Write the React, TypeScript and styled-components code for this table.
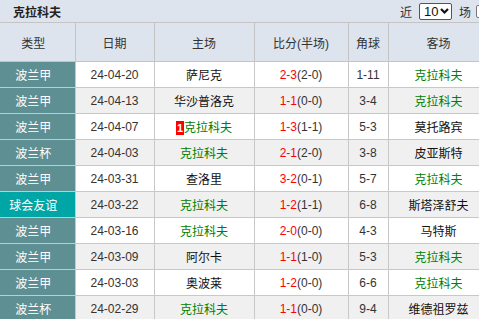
import React from "react";
import styled, { createGlobalStyle } from "styled-components";

const Global = createGlobalStyle`
  html, body { margin: 0; padding: 0; background: #fff; overflow: hidden; }
  body { font-family: "Liberation Sans", "Noto Sans CJK SC", sans-serif; font-size: 12px; color: #333; }
`;

const Page = styled.div`
  width: 489px;
`;

const TopBar = styled.div`
  height: 22px;
  background: #dde4ee;
  display: flex;
  align-items: center;
  padding-left: 13px;
`;

const Title = styled.div`
  font-weight: bold;
  font-size: 12px;
  color: #222;
  flex: 1;
`;

const Filter = styled.div`
  display: flex;
  align-items: center;
  flex-shrink: 0;
  font-size: 12px;
  color: #333;
`;

const FakeSelect = styled.div`
  box-sizing: border-box;
  flex-shrink: 0;
  width: 33px;
  height: 17px;
  border: 1px solid #555;
  border-radius: 2px;
  background: #fff;
  margin: 0 7px 0 7px;
  display: flex;
  align-items: center;
  justify-content: space-between;
  padding: 0 2px 0 4px;
  font-size: 13px;
  color: #111;
`;

const Check = styled.div`
  flex-shrink: 0;
  width: 11px;
  height: 11px;
  border: 1px solid #777;
  border-radius: 2px;
  background: #fff;
  margin-left: 5px;
`;

const Table = styled.table`
  border-collapse: collapse;
  table-layout: fixed;
  width: 489px;
`;

const HeadCell = styled.th`
  height: 38px;
  padding: 0;
  background: #dde4ee;
  border: 1px solid #c4c4c4;
  font-weight: normal;
  font-size: 12px;
  color: #333;
  text-align: center;
  &:first-child { border-left: none; padding-right: 8px; }
`;

const Row = styled.tr<{ $alt: boolean }>`
  background: ${(p) => (p.$alt ? "#f0f0f0" : "#fff")};
`;

const Cell = styled.td`
  height: 25px;
  padding: 0;
  border: 1px solid #c8c8c8;
  text-align: center;
  font-size: 12px;
  color: #333;
  white-space: nowrap;
`;

const TypeCell = styled.td<{ $friendly: boolean }>`
  height: 25px;
  padding: 0 8px 0 0;
  border: 1px solid #c8c8c8;
  border-left: none;
  text-align: center;
  font-size: 12px;
  color: #fff;
  background: ${(p) => (p.$friendly ? "#00a6a6" : "#5e8f92")};
`;

const Team = styled.span<{ $home: boolean }>`
  color: ${(p) => (p.$home ? "#008000" : "#111")};
`;

const Badge = styled.span`
  display: inline-block;
  background: #ff0000;
  color: #fff;
  font-weight: bold;
  font-size: 11px;
  line-height: 14px;
  padding: 0 1px;
`;

const Score = styled.span`
  color: #f00;
`;

const Half = styled.span`
  color: #333;
`;

type Match = {
  type: string;
  date: string;
  home: string;
  score: string;
  half: string;
  corner: string;
  away: string;
  badge?: string;
};

const TEAM = "克拉科夫";

const matches: Match[] = [
  { type: "波兰甲", date: "24-04-20", home: "萨尼克", score: "2-3", half: "(2-0)", corner: "1-11", away: TEAM },
  { type: "波兰甲", date: "24-04-13", home: "华沙普洛克", score: "1-1", half: "(0-0)", corner: "3-4", away: TEAM },
  { type: "波兰甲", date: "24-04-07", home: TEAM, score: "1-3", half: "(1-1)", corner: "5-3", away: "莫托路宾", badge: "1" },
  { type: "波兰杯", date: "24-04-03", home: TEAM, score: "2-1", half: "(2-0)", corner: "3-8", away: "皮亚斯特" },
  { type: "波兰甲", date: "24-03-31", home: "查洛里", score: "3-2", half: "(0-1)", corner: "5-7", away: TEAM },
  { type: "球会友谊", date: "24-03-22", home: TEAM, score: "1-2", half: "(1-1)", corner: "6-8", away: "斯塔泽舒夫" },
  { type: "波兰甲", date: "24-03-16", home: TEAM, score: "2-0", half: "(0-0)", corner: "4-3", away: "马特斯" },
  { type: "波兰甲", date: "24-03-09", home: "阿尔卡", score: "1-1", half: "(1-0)", corner: "5-3", away: TEAM },
  { type: "波兰甲", date: "24-03-03", home: "奥波莱", score: "1-2", half: "(0-0)", corner: "6-6", away: TEAM },
  { type: "波兰杯", date: "24-02-29", home: TEAM, score: "1-1", half: "(0-0)", corner: "9-4", away: "维德祖罗兹" },
];

const Chevron = () => (
  <svg width="9" height="8" viewBox="0 0 9 8">
    <path d="M1 2 L4.5 5.5 L8 2" fill="none" stroke="#111" strokeWidth="2.2" />
  </svg>
);

export default function App() {
  return (
    <Page>
      <Global />
      <TopBar>
        <Title>克拉科夫</Title>
        <Filter>
          近
          <FakeSelect>
            <span>10</span>
            <Chevron />
          </FakeSelect>
          场
          <Check />
        </Filter>
      </TopBar>
      <Table>
        <colgroup>
          <col style={{ width: 75 }} />
          <col style={{ width: 79 }} />
          <col style={{ width: 100 }} />
          <col style={{ width: 94 }} />
          <col style={{ width: 40 }} />
          <col style={{ width: 101 }} />
        </colgroup>
        <thead>
          <tr>
            <HeadCell>类型</HeadCell>
            <HeadCell>日期</HeadCell>
            <HeadCell>主场</HeadCell>
            <HeadCell>比分(半场)</HeadCell>
            <HeadCell>角球</HeadCell>
            <HeadCell>客场</HeadCell>
          </tr>
        </thead>
        <tbody>
          {matches.map((m, i) => (
            <Row key={i} $alt={i % 2 === 1}>
              <TypeCell $friendly={m.type === "球会友谊"}>{m.type}</TypeCell>
              <Cell>{m.date}</Cell>
              <Cell>
                {m.badge && <Badge>{m.badge}</Badge>}
                <Team $home={m.home === TEAM}>{m.home}</Team>
              </Cell>
              <Cell>
                <Score>{m.score}</Score>
                <Half>{m.half}</Half>
              </Cell>
              <Cell>{m.corner}</Cell>
              <Cell>
                <Team $home={m.away === TEAM}>{m.away}</Team>
              </Cell>
            </Row>
          ))}
        </tbody>
      </Table>
    </Page>
  );
}
